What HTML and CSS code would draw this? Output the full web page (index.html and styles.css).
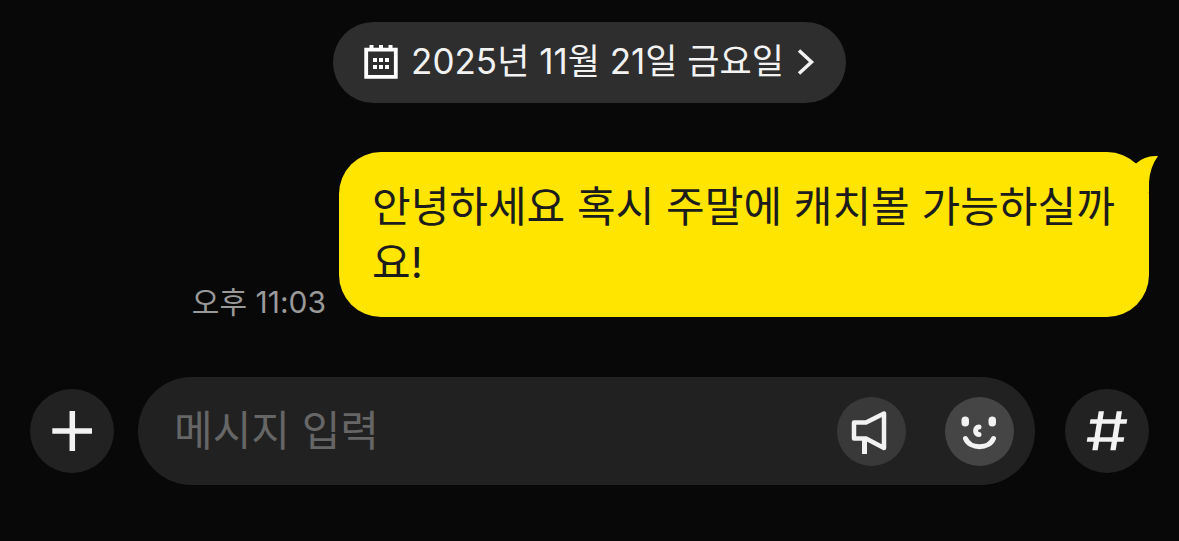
FILE: index.html
```html
<!DOCTYPE html>
<html lang="ko">
<head>
<meta charset="utf-8">
<meta name="viewport" content="width=device-width, initial-scale=1">
<title>채팅</title>
<link rel="stylesheet" href="styles.css">
</head>
<body>
<main class="chat">
  <button class="date" type="button">
    <svg class="date-calendar" viewBox="0 0 34 34" aria-hidden="true">
      <path d="M2.200 4.700H31.800V31.800H2.200Z" fill="none" stroke="currentColor" stroke-width="3.800"/>
      <path d="M5.500 0h4v5h-4zM15 0h4v5h-4zM24.500 0h4v5h-4zM9 13h4v4H9zM15 13h4v4h-4zM21 13h4v4h-4zM9 20h4v4H9zM15 20h4v4h-4zM21 20h4v4h-4z" fill="currentColor"/>
    </svg>
    <span class="date-text">2025년 11월 21일 금요일</span>
    <svg class="date-arrow" viewBox="0 0 18 26" aria-hidden="true">
      <path d="M2 1.500 14.500 13 2 24.500" fill="none" stroke="currentColor" stroke-width="3.500"/>
    </svg>
  </button>

  <div class="message">
    <time class="time" datetime="2025-11-21T23:03">오후 11:03</time>
    <div class="bubble">
      <p class="bubble-text">안녕하세요 혹시 주말에 캐치볼 가능하실까요!</p>
      <svg class="bubble-tail" viewBox="0 0 30 40" aria-hidden="true">
        <path d="M0 40V8L8 11.500Q17 3 30 4Q22 15 21 30V40Z" fill="#ffe500"/>
      </svg>
    </div>
  </div>

  <form class="composer">
    <button class="round" type="button" aria-label="추가">
      <svg class="icon" viewBox="0 0 84 84" aria-hidden="true">
        <path d="M42.300 22V62M22.300 42H62" fill="none" stroke="currentColor" stroke-width="5.500"/>
      </svg>
    </button>
    <div class="field">
      <input class="field-input" type="text" placeholder="메시지 입력" aria-label="메시지 입력">
      <button class="tool" type="button" aria-label="확성기">
        <svg class="icon" viewBox="0 0 69 69" aria-hidden="true">
          <path d="M29 25.500 47 16.500V51L29 41.500H17V25.500Z" fill="none" stroke="currentColor" stroke-width="4.500" stroke-linejoin="round"/>
          <path d="M27.500 41V57" fill="none" stroke="currentColor" stroke-width="5"/>
        </svg>
      </button>
      <button class="tool tool-emoji" type="button" aria-label="이모티콘">
        <svg class="icon" viewBox="0 0 69 69" aria-hidden="true">
          <rect x="16.500" y="19.500" width="7.500" height="10" rx="3.750" fill="currentColor"/>
          <rect x="43.500" y="19.500" width="7.500" height="10" rx="3.750" fill="currentColor"/>
          <path d="M34 30C29.500 30 29.500 37.500 34 37.500" fill="none" stroke="currentColor" stroke-width="5" stroke-linecap="round"/>
          <path d="M20.500 41.500C25 52.500 44 52.500 48.500 41.500" fill="none" stroke="currentColor" stroke-width="5" stroke-linecap="round"/>
        </svg>
      </button>
    </div>
    <button class="round round-hash" type="button" aria-label="샵 검색">
      <svg class="icon" viewBox="0 0 84 84" aria-hidden="true">
        <path d="M33.700 22.300H39L32.700 61.300H27.300ZM51.700 22.300H57L50.700 61.300H45.300ZM25.500 30.300H62.300L61.500 34.800H24.700ZM22.500 48.300H59.300L58.500 52.800H21.700Z" fill="currentColor"/>
      </svg>
    </button>
  </form>
</main>
</body>
</html>
```
FILE: styles.css
```css
* {
  box-sizing: border-box;
}

body {
  margin: 0;
  background: #080808;
  color: #f2f2f2;
  font-family: Inter, "Noto Sans CJK KR", sans-serif;
}

button,
input {
  margin: 0;
  padding: 0;
  border: 0;
  color: inherit;
  font: inherit;
}

.chat {
  display: flex;
  flex-direction: column;
  padding: 22px 30px 56px;
}

.date {
  display: flex;
  align-items: center;
  align-self: center;
  gap: 13px;
  padding: 15px 31px 17px;
  border-radius: 41px;
  background: #2e2e2e;
  font-size: 35px;
  line-height: 49px;
}

.date-calendar {
  width: 34px;
  height: 34px;
  color: #ffffff;
}

.date-arrow {
  width: 18px;
  height: 26px;
}

.message {
  display: flex;
  align-items: flex-end;
  justify-content: flex-end;
  gap: 13px;
  margin-top: 49px;
}

.time {
  flex: none;
  color: #999999;
  font-size: 30px;
  line-height: 30px;
}

.bubble {
  position: relative;
  max-width: 810px;
  padding: 27px 33px 26px;
  border-radius: 42px;
  background: #ffe500;
  color: #1c1c1c;
}

.bubble-text {
  margin: 0;
  font-size: 42px;
  line-height: 56px;
  word-break: break-all;
}

.bubble-tail {
  position: absolute;
  top: 0;
  right: -9px;
  width: 30px;
  height: 40px;
}

.composer {
  display: flex;
  align-items: center;
  margin-top: 60px;
}

.round {
  flex: none;
  width: 84px;
  height: 84px;
  border-radius: 50%;
  background: #222222;
}

.round-hash {
  margin-left: 30px;
}

.icon {
  display: block;
  width: 100%;
  height: 100%;
}

.field {
  display: flex;
  flex: 1;
  align-items: center;
  gap: 39px;
  min-width: 0;
  height: 108px;
  margin-left: 24px;
  padding: 0 21px 0 36px;
  border-radius: 54px;
  background: #212121;
}

.field-input {
  flex: 1;
  min-width: 0;
  background: transparent;
  font-size: 42px;
  line-height: 64px;
  outline: none;
}

.field-input::placeholder {
  color: #666666;
  opacity: 1;
}

.tool {
  flex: none;
  width: 69px;
  height: 69px;
  border-radius: 50%;
  background: #393939;
}

.tool-emoji {
  background: #454545;
}
```
